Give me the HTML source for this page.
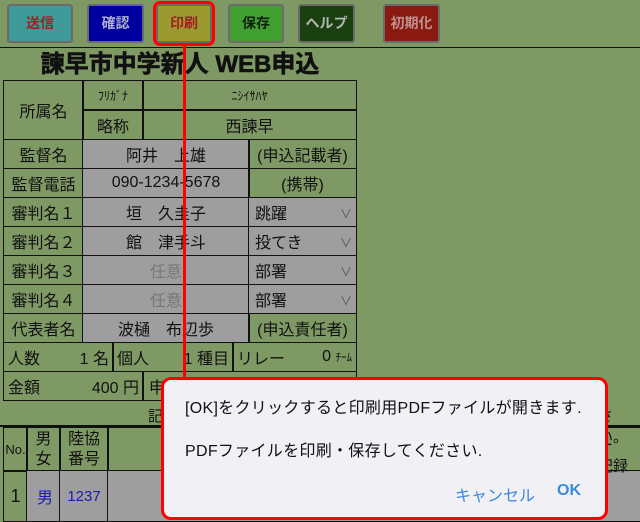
<!DOCTYPE html>
<html><head><meta charset="utf-8"><style>
*{margin:0;padding:0;box-sizing:border-box}
body{width:640px;height:520px;overflow:hidden;background:#7f9965;font-family:"Liberation Sans","Noto Sans CJK JP",sans-serif;position:relative;color:#111}
.a{position:absolute}
.btn{position:absolute;top:4px;height:39px;border:2px solid #6b6b6b;border-radius:3px;font-size:14px;text-align:center;line-height:35px;font-weight:bold}
.c{position:absolute;border:1.5px solid #111;display:flex;align-items:center;justify-content:center;font-size:16px}
.g{background:#9e9e9e}
.dd::after{content:"∨";position:absolute;right:4px;font-size:12px;color:#555;top:7px}
.l{justify-content:flex-start;padding-left:6px}
</style></head><body>
<div class="btn" style="left:7px;width:66px;background:#3f9a9a;color:#a02020">送信</div>
<div class="btn" style="left:87px;width:57px;background:#0000a0;color:#b0b0d0">確認</div>
<div class="btn" style="left:156px;width:56px;background:#9a9a30;color:#a02020">印刷</div>
<div class="a" style="left:153px;top:1px;width:62px;height:45px;border:3px solid #f00;border-radius:7px"></div>
<div class="btn" style="left:228px;width:56px;background:#40a030;color:#102010">保存</div>
<div class="btn" style="left:298px;width:57px;background:#1a4010;color:#b0b8b0">ヘルプ</div>
<div class="btn" style="left:383px;width:57px;background:#8a1a10;color:#c09090">初期化</div>
<div class="a" style="left:0;top:47px;width:640px;height:1px;background:#111"></div>
<div class="a" style="left:0;top:50px;width:360px;text-align:center;font-size:24px;font-weight:bold;line-height:30px;-webkit-text-stroke:0.6px #111">諫早市中学新人 WEB申込</div>

<div class="c" style="left:3px;top:80px;width:81px;height:60px">所属名</div>
<div class="c" style="left:82px;top:80px;width:62px;height:31px;font-size:12px">ﾌﾘｶﾞﾅ</div>
<div class="c" style="left:142px;top:80px;width:215px;height:31px;font-size:12px">ﾆｼｲｻﾊﾔ</div>
<div class="c" style="left:82px;top:109px;width:62px;height:31px">略称</div>
<div class="c" style="left:142px;top:109px;width:215px;height:31px">西諫早</div>

<div class="c" style="left:3px;top:139px;width:81px;height:30px">監督名</div>
<div class="c g" style="left:82px;top:139px;width:168px;height:30px">阿井　上雄</div>
<div class="c" style="left:248px;top:139px;width:109px;height:30px">(申込記載者)</div>
<div class="c" style="left:3px;top:168px;width:81px;height:30px">監督電話</div>
<div class="c g" style="left:82px;top:168px;width:168px;height:30px">090-1234-5678</div>
<div class="c" style="left:248px;top:168px;width:109px;height:30px">(携帯)</div>

<div class="c" style="left:3px;top:197px;width:81px;height:30px">審判名１</div>
<div class="c g" style="left:82px;top:197px;width:168px;height:30px">垣　久圭子</div>
<div class="c g l dd" style="left:248px;top:197px;width:109px;height:30px">跳躍</div>
<div class="c" style="left:3px;top:226px;width:81px;height:30px">審判名２</div>
<div class="c g" style="left:82px;top:226px;width:168px;height:30px">館　津手斗</div>
<div class="c g l dd" style="left:248px;top:226px;width:109px;height:30px">投てき</div>
<div class="c" style="left:3px;top:255px;width:81px;height:30px">審判名３</div>
<div class="c g" style="left:82px;top:255px;width:168px;height:30px;color:#777">任意</div>
<div class="c g l dd" style="left:248px;top:255px;width:109px;height:30px">部署</div>
<div class="c" style="left:3px;top:284px;width:81px;height:30px">審判名４</div>
<div class="c g" style="left:82px;top:284px;width:168px;height:30px;color:#777">任意</div>
<div class="c g l dd" style="left:248px;top:284px;width:109px;height:30px">部署</div>
<div class="c" style="left:3px;top:313px;width:81px;height:30px">代表者名</div>
<div class="c g" style="left:82px;top:313px;width:168px;height:30px">波樋　布辺歩</div>
<div class="c" style="left:248px;top:313px;width:109px;height:30px">(申込責任者)</div>

<div class="c" style="left:3px;top:342px;width:111px;height:30px;justify-content:space-between;padding:0 4px"><span>人数</span><span>1 名</span></div>
<div class="c" style="left:112px;top:342px;width:122px;height:30px;justify-content:space-between;padding:0 4px"><span>個人</span><span>1 種目</span></div>
<div class="c" style="left:232px;top:342px;width:125px;height:30px;justify-content:space-between;padding:0 4px"><span>リレー</span><span>0 <small style="font-size:11px">ﾁｰﾑ</small></span></div>
<div class="c" style="left:3px;top:371px;width:141px;height:30px;justify-content:space-between;padding:0 4px"><span>金額</span><span>400 円</span></div>
<div class="c l" style="left:142px;top:371px;width:215px;height:30px">申</div>
<div class="a" style="left:148px;top:405px;font-size:15px">記</div>
<div class="a" style="left:598px;top:405px;font-size:15px">さい。</div>
<div class="a" style="left:0;top:425px;width:640px;height:1.5px;background:#111"></div>

<div class="c" style="left:3px;top:427px;width:25px;height:45px;font-size:13px">No.</div>
<div class="c" style="left:26px;top:427px;width:35px;height:45px;line-height:20px;text-align:center">男<br>女</div>
<div class="c" style="left:59px;top:427px;width:50px;height:45px;line-height:20px;text-align:center">陸協<br>番号</div>
<div class="c" style="left:107px;top:427px;width:540px;height:45px"></div>
<div class="c" style="left:3px;top:470px;width:25px;height:52px;font-size:18px">1</div>
<div class="c g" style="left:26px;top:470px;width:35px;height:52px;color:#1a1ab0;justify-content:flex-start;padding-left:10px">男<span style="font-size:11px;color:#555;margin-left:6px">∨</span></div>
<div class="c g" style="left:59px;top:470px;width:50px;height:52px;color:#1a1ab0;font-size:15px">1237</div>
<div class="c g" style="left:107px;top:470px;width:540px;height:52px"></div>
<div class="a" style="left:598px;top:435px;font-size:15px;line-height:21px">ー<br>記録</div>

<div class="a" style="left:183px;top:46px;width:3px;height:333px;background:#f00"></div>
<div class="a" style="left:161px;top:377px;width:447px;height:143px;border:3px solid #f00;border-radius:10px;background:#f0f0f5"></div>
<div class="a" style="left:185px;top:394px;font-size:16px;color:#111;letter-spacing:0.3px">[OK]をクリックすると印刷用PDFファイルが開きます.</div>
<div class="a" style="left:185px;top:437px;font-size:16px;color:#111;letter-spacing:0.3px">PDFファイルを印刷・保存してください.</div>
<div class="a" style="left:455px;top:482px;font-size:16px;color:#3a8ae0">キャンセル</div>
<div class="a" style="left:557px;top:482px;font-size:16px;color:#3a8ae0;font-weight:bold">OK</div>
</body></html>
